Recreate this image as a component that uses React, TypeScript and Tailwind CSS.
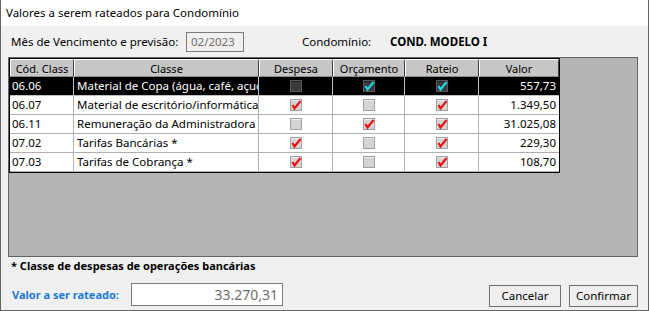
import React from "react";

type Row = {
  cod: string;
  classe: string;
  despesa: boolean;
  orcamento: boolean;
  rateio: boolean;
  valor: string;
};

const rows: Row[] = [
  { cod: "06.06", classe: "Material de Copa (água, café, açucar)", despesa: false, orcamento: true, rateio: true, valor: "557,73" },
  { cod: "06.07", classe: "Material de escritório/informática", despesa: true, orcamento: false, rateio: true, valor: "1.349,50" },
  { cod: "06.11", classe: "Remuneração da Administradora de bens", despesa: false, orcamento: true, rateio: true, valor: "31.025,08" },
  { cod: "07.02", classe: "Tarifas Bancárias *", despesa: true, orcamento: false, rateio: true, valor: "229,30" },
  { cod: "07.03", classe: "Tarifas de Cobrança *", despesa: true, orcamento: false, rateio: true, valor: "108,70" },
];

const cols = "grid grid-cols-[64px_185px_74px_72px_74px_80px]";

function Check({ on, dark }: { on: boolean; dark: boolean }) {
  return (
    <svg width="12" height="12" viewBox="0 0 12 12">
      <rect x="0" y="0" width="12" height="12" fill={dark ? "#5a5a5a" : "#a0a0a0"} />
      <rect x="1" y="1" width="10" height="10" fill={dark ? "#3a3a3a" : "#d4d4d4"} />
      <rect x="1" y="1" width="10" height="1" fill={dark ? "#222" : "#eeeeee"} />
      {on && (
        <path
          d="M2.5 6 L4.5 9.5 L10.5 2"
          fill="none"
          stroke={dark ? "#1fd6e8" : "#ee1111"}
          strokeWidth="2.2"
        />
      )}
    </svg>
  );
}

export default function App() {
  return (
    <div
      className="w-[649px] h-[311px] flex flex-col border-x border-b border-[#646464] bg-[#f0f0f0] text-[11px] text-black overflow-hidden"
      style={{ fontFamily: '"Noto Sans", "Liberation Sans", sans-serif' }}
    >
      <div className="h-[26px] shrink-0 bg-white flex items-center pl-[5px] text-[11.5px]">
        Valores a serem rateados para Condomínio
      </div>

      <div className="flex flex-col pl-[7px] pr-[10px]">
        <div className="mt-[6px] h-[20px] flex items-center text-[11.5px]">
          <span className="ml-[3px] w-[175px]">Mês de Vencimento e previsão:</span>
          <div className="w-[58px] h-[20px] border border-[#7a7a7a] bg-[#f0f0f0] text-[#6d6d6d] flex items-center pl-[4px]">
            02/2023
          </div>
          <span className="ml-[58px] w-[88px]">Condomínio:</span>
          <span className="font-bold">COND. MODELO I</span>
        </div>

        <div className="mt-[5px] h-[200px] w-[630px] bg-[#b4b4b4] border border-[#646464]">
          <div className="w-[551px] border border-black bg-white">
            <div className={`${cols} h-[18px] bg-black`}>
              {["Cód. Class", "Classe", "Despesa", "Orçamento", "Rateio", "Valor"].map((h) => (
                <div
                  key={h}
                  className="bg-[#c6c6c6] border-t border-l border-t-white border-l-white border-r border-r-[#404040] border-b border-b-[#8a8a8a] flex items-center justify-center leading-none"
                >
                  {h}
                </div>
              ))}
            </div>
            {rows.map((r, i) => {
              const sel = i === 0;
              const cell = `h-[19px] flex items-center border-r border-b text-[11.5px] ${
                sel ? "bg-black text-white border-[#c0c0c0]" : "bg-white border-[#b0b0b0]"
              }`;
              return (
                <div key={r.cod} className={cols}>
                  <div className={`${cell} pl-[2px]`}>{r.cod}</div>
                  <div className={`${cell} pl-[3px] overflow-hidden whitespace-nowrap`}>{r.classe}</div>
                  <div className={`${cell} justify-center`}>
                    <Check on={r.despesa} dark={sel} />
                  </div>
                  <div className={`${cell} justify-center`}>
                    <Check on={r.orcamento} dark={sel} />
                  </div>
                  <div className={`${cell} justify-center`}>
                    <Check on={r.rateio} dark={sel} />
                  </div>
                  <div className={`${cell} justify-end pr-[3px] border-r-0`}>{r.valor}</div>
                </div>
              );
            })}
          </div>
        </div>

        <div className="mt-[1px] h-[16px] ml-[3px] font-bold flex items-center">
          * Classe de despesas de operações bancárias
        </div>

        <div className="mt-[9px] flex items-start">
          <span className="ml-[4px] mt-[4px] w-[119px] font-bold text-[#1c7ad6]">Valor a ser rateado:</span>
          <div className="w-[152px] h-[23px] border border-[#7a7a7a] bg-white text-[14px] text-[#6d6d6d] flex items-center justify-end pr-[4px]">
            33.270,31
          </div>
          <div className="ml-auto mt-[2px] flex gap-[8px] text-[11.5px]">
            <button className="w-[72px] h-[22px] border border-[#707070] bg-[#efefef] leading-none">Cancelar</button>
            <button className="w-[69px] h-[22px] border border-[#707070] bg-[#efefef] leading-none">Confirmar</button>
          </div>
        </div>
      </div>
    </div>
  );
}
